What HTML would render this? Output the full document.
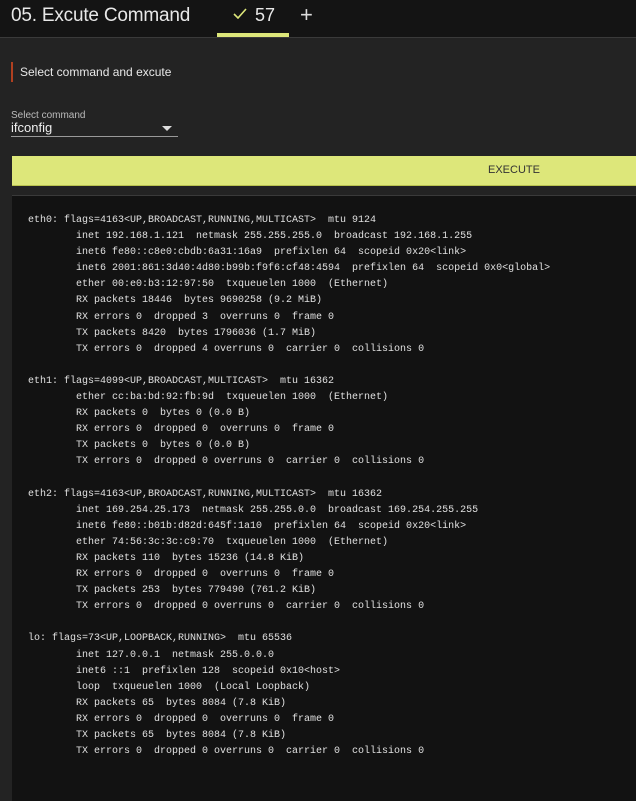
<!DOCTYPE html>
<html><head><meta charset="utf-8"><style>
body{margin:0;width:636px;height:800px;overflow:hidden;background:#232323;font-family:"Liberation Sans",sans-serif;position:relative}
.hdr{position:absolute;left:0;top:0;width:636px;height:37px;background:#141414;border-bottom:1px solid #3a3a3a}
.title{position:absolute;left:11px;top:5px;font-size:19px;color:#e8e8e8;letter-spacing:-0.2px}
.tab{position:absolute;left:233px;top:5px;font-size:18px;color:#e8e8e8}
.tab svg{vertical-align:2px;margin-right:8px}
.plus{position:absolute;left:300px;top:2px;font-size:22px;color:#ddd}
.bar{position:absolute;left:217px;top:33px;width:72px;height:4px;background:#dde77a}
.sec{position:absolute;left:11px;top:62px;height:20px;border-left:2px solid #b04020;padding-left:7px;font-size:12px;color:#e8e8e8;line-height:20px}
.lbl{position:absolute;left:11px;top:110px;font-size:10px;color:#bbb}
.sel{position:absolute;left:11px;top:120px;width:167px;height:16px;border-bottom:1px solid #999;font-size:13px;color:#eee}
.sel:after{content:"";position:absolute;right:6px;top:6px;border-left:5px solid transparent;border-right:5px solid transparent;border-top:5px solid #ddd}
.btn{position:absolute;left:12px;top:156px;width:624px;height:29px;background:#dde77a;border-bottom:1px solid #b9c24f}
.btn span{position:absolute;left:476px;top:8px;font-size:11px;color:#333}
.out{position:absolute;left:12px;top:195px;width:624px;height:605px;background:#121212;border-top:1px solid #3a3a3a}
pre{margin:0;position:absolute;left:16px;top:17px;font-family:"Liberation Mono",monospace;font-size:10px;line-height:16.1px;color:#e0e0e0}
</style></head><body>
<div class="hdr"><div class="title">05. Excute Command</div>
<div class="tab"><svg width="14" height="11" viewBox="0 0 14 11"><path d="M1 6 L5 10 L13 1" stroke="#dde77a" stroke-width="1.6" fill="none"/></svg>57</div>
<div class="plus">+</div><div class="bar"></div></div>
<div class="sec">Select command and excute</div>
<div class="lbl">Select command</div>
<div class="sel">ifconfig</div>
<div class="btn"><span>EXECUTE</span></div>
<div class="out"><pre>eth0: flags=4163&lt;UP,BROADCAST,RUNNING,MULTICAST&gt;  mtu 9124
        inet 192.168.1.121  netmask 255.255.255.0  broadcast 192.168.1.255
        inet6 fe80::c8e0:cbdb:6a31:16a9  prefixlen 64  scopeid 0x20&lt;link&gt;
        inet6 2001:861:3d40:4d80:b99b:f9f6:cf48:4594  prefixlen 64  scopeid 0x0&lt;global&gt;
        ether 00:e0:b3:12:97:50  txqueuelen 1000  (Ethernet)
        RX packets 18446  bytes 9690258 (9.2 MiB)
        RX errors 0  dropped 3  overruns 0  frame 0
        TX packets 8420  bytes 1796036 (1.7 MiB)
        TX errors 0  dropped 4 overruns 0  carrier 0  collisions 0

eth1: flags=4099&lt;UP,BROADCAST,MULTICAST&gt;  mtu 16362
        ether cc:ba:bd:92:fb:9d  txqueuelen 1000  (Ethernet)
        RX packets 0  bytes 0 (0.0 B)
        RX errors 0  dropped 0  overruns 0  frame 0
        TX packets 0  bytes 0 (0.0 B)
        TX errors 0  dropped 0 overruns 0  carrier 0  collisions 0

eth2: flags=4163&lt;UP,BROADCAST,RUNNING,MULTICAST&gt;  mtu 16362
        inet 169.254.25.173  netmask 255.255.0.0  broadcast 169.254.255.255
        inet6 fe80::b01b:d82d:645f:1a10  prefixlen 64  scopeid 0x20&lt;link&gt;
        ether 74:56:3c:3c:c9:70  txqueuelen 1000  (Ethernet)
        RX packets 110  bytes 15236 (14.8 KiB)
        RX errors 0  dropped 0  overruns 0  frame 0
        TX packets 253  bytes 779490 (761.2 KiB)
        TX errors 0  dropped 0 overruns 0  carrier 0  collisions 0

lo: flags=73&lt;UP,LOOPBACK,RUNNING&gt;  mtu 65536
        inet 127.0.0.1  netmask 255.0.0.0
        inet6 ::1  prefixlen 128  scopeid 0x10&lt;host&gt;
        loop  txqueuelen 1000  (Local Loopback)
        RX packets 65  bytes 8084 (7.8 KiB)
        RX errors 0  dropped 0  overruns 0  frame 0
        TX packets 65  bytes 8084 (7.8 KiB)
        TX errors 0  dropped 0 overruns 0  carrier 0  collisions 0</pre></div>
</body></html>
